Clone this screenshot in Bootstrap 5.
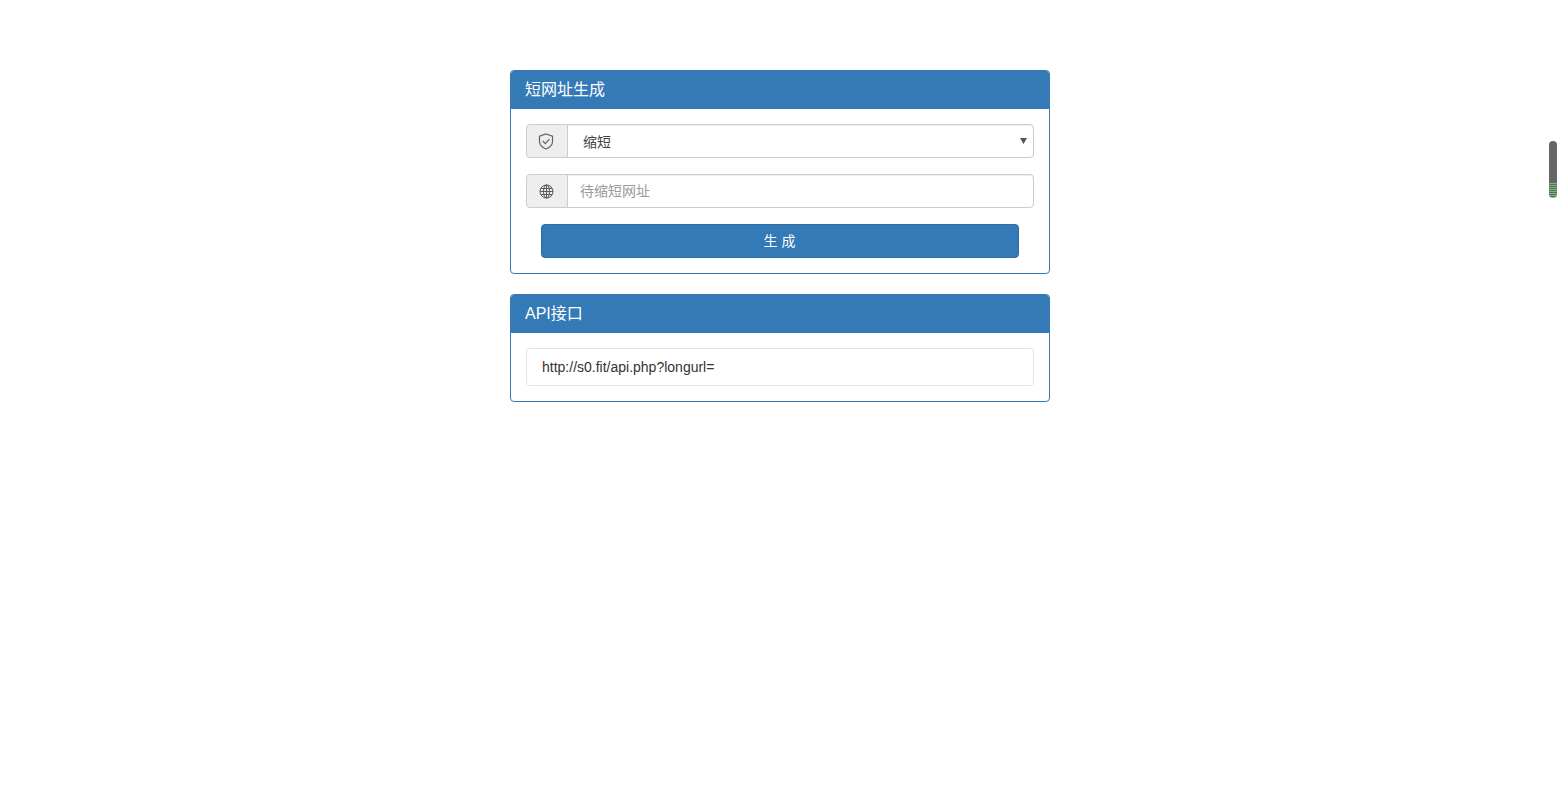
<!DOCTYPE html>
<html lang="zh-CN">
<head>
    <meta charset="UTF-8">
    <meta name="viewport" content="width=device-width, initial-scale=1.0">
    <title>短网址生成</title>
    <link href="https://cdn.jsdelivr.net/npm/bootstrap@5.3.0/dist/css/bootstrap.min.css" rel="stylesheet">
    <style>
        body {
            background-color: #fff;
            color: #333;
            font-family: "Liberation Sans", "Noto Sans CJK SC", sans-serif;
            font-size: 14px;
            line-height: 20px;
            padding-left: 3px;
        }
        .page-wrap {
            width: 540px;
            margin: 70px auto 0;
        }
        .short-panel {
            border: 1px solid #337ab7;
            border-radius: 4px;
            margin-bottom: 20px;
            --bs-card-bg: #fff;
        }
        .short-head {
            background-color: #337ab7;
            border: 0;
            border-radius: 3px 3px 0 0 !important;
            color: #fff;
            font-size: 16px;
            line-height: 18px;
            padding: 10px 15px 10px 14px;
            height: 38px;
        }
        .short-body {
            padding: 15px;
        }
        .field-group {
            height: 34px;
            margin-bottom: 16px;
        }
        .field-icon {
            background-color: #eee;
            border: 1px solid #ccc;
            border-radius: 4px 0 0 4px;
            justify-content: center;
            padding: 0 2px 0 0;
            width: 42px;
        }
        .field-input {
            border: 1px solid #ccc;
            border-radius: 0 4px 4px 0 !important;
            box-shadow: inset 0 1px 1px rgba(0, 0, 0, .075);
            color: #555;
            font-size: 14px;
            height: 34px;
            line-height: 20px;
            padding: 6px 12px;
        }
        .field-input::placeholder {
            color: #999;
        }
        .field-select {
            background-image: url("data:image/svg+xml,%3Csvg xmlns='http://www.w3.org/2000/svg' width='7' height='6'%3E%3Cpath fill='%23555' d='M0 0h7L3.5 6z'/%3E%3C/svg%3E");
            background-position: right 6px center;
            background-size: 7px 6px;
            color: #444;
            padding: 7px 12px 5px 15px;
        }
        .make-btn {
            background-color: #337ab7;
            border: 1px solid #2e6da4;
            border-radius: 4px;
            color: #fff;
            display: block;
            font-size: 14px;
            height: 34px;
            line-height: 20px;
            margin: 0 15px;
            padding: 6px 13px 6px 12px;
            width: 478px;
        }
        .api-well {
            border: 1px solid #e3e3e3;
            border-radius: 4px;
            height: 38px;
            line-height: 20px;
            padding: 8px 15px;
        }
        .scroll-thumb {
            background: repeating-linear-gradient(#666 0 1px, #6dbb75 1px 2px) bottom / 100% 16px no-repeat, #666;
            border-radius: 4px;
            height: 57px;
            position: fixed;
            right: 0;
            top: 141px;
            width: 8px;
        }
    </style>
</head>
<body>
    <div class="page-wrap">
        <div class="card short-panel">
            <div class="card-header short-head">短网址生成</div>
            <div class="card-body short-body">
                <div class="input-group field-group">
                    <span class="input-group-text field-icon">
                        <svg width="16" height="17" viewBox="0 0 16 17" fill="none" stroke="#5a6470" stroke-width="1.2">
                            <path d="M8 1 14.5 3.2V8.5C14.5 12 11.5 14.6 8 16 4.5 14.6 1.5 12 1.5 8.5V3.2Z"/>
                            <path d="M4.8 8 7.3 10.6 11.4 6.2"/>
                        </svg>
                    </span>
                    <select class="form-select field-input field-select">
                        <option>缩短</option>
                    </select>
                </div>
                <div class="input-group field-group">
                    <span class="input-group-text field-icon">
                        <svg width="15" height="15" viewBox="0 0 15 15" fill="none" stroke="#5a5a5a" stroke-width="1">
                            <circle cx="7.5" cy="7.5" r="6.5"/>
                            <ellipse cx="7.5" cy="7.5" rx="3" ry="6.5"/>
                            <path d="M7.5 1V14M1 7.5H14M2 4.5H13M2 10.5H13"/>
                        </svg>
                    </span>
                    <input type="text" class="form-control field-input" placeholder="待缩短网址">
                </div>
                <button type="button" class="btn make-btn">生 成</button>
            </div>
        </div>
        <div class="card short-panel">
            <div class="card-header short-head">API接口</div>
            <div class="card-body short-body">
                <div class="api-well">http://s0.fit/api.php?longurl=</div>
            </div>
        </div>
    </div>
    <div class="scroll-thumb"></div>
</body>
</html>
